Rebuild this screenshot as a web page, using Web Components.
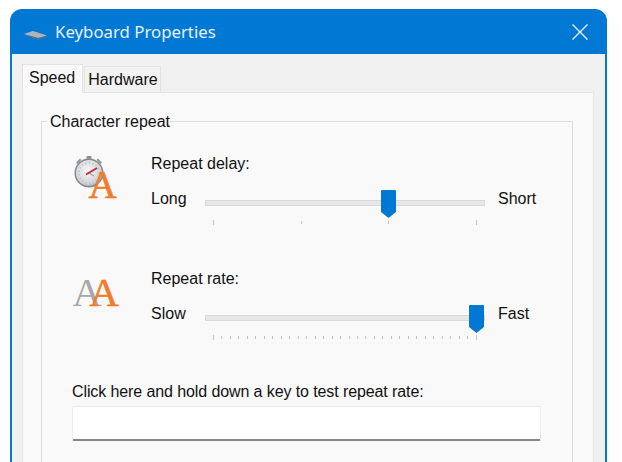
<!DOCTYPE html>
<html>
<head>
<meta charset="utf-8">
<title>Keyboard Properties</title>
<style>
  html, body { height: 100%; overflow: hidden; }
  body {
    margin: 0;
    padding: 9px 15px 0 10px;
    box-sizing: border-box;
    background: #ffffff;
    font-family: "Liberation Sans", Arial, sans-serif;
    font-size: 16px;
    color: #111111;
  }
</style>
</head>
<body>
<kb-window heading="Keyboard Properties">
  <kb-tabs>
    <kb-tab active>Speed</kb-tab>
    <kb-tab>Hardware</kb-tab>
  </kb-tabs>
  <kb-panel>
    <kb-group legend="Character repeat">
      <kb-setting label="Repeat delay:" low="Long" high="Short" ticks="4" value="0.6667" icon="delay"></kb-setting>
      <kb-setting label="Repeat rate:" low="Slow" high="Fast" ticks="32" value="1" icon="rate"></kb-setting>
      <kb-testbox label="Click here and hold down a key to test repeat rate:"></kb-testbox>
    </kb-group>
  </kb-panel>
</kb-window>

<script>
class KbWindow extends HTMLElement {
  constructor() {
    super();
    this.attachShadow({ mode: "open" });
  }

  connectedCallback() {
    const heading = this.getAttribute("heading");

    this.shadowRoot.innerHTML = `
    <style>
      :host { display: block; height: calc(100vh - 9px); }
      .frame {
        height: 100%;
        box-sizing: border-box;
        display: flex;
        flex-direction: column;
        background: #0078d4;
        border-radius: 12px 12px 0 0;
        padding: 0 2px;
      }
      .titlebar {
        flex: none;
        height: 45px;
        display: flex;
        align-items: center;
        color: #e6f2fc;
        font-family: "Noto Sans", "Open Sans", sans-serif;
        font-size: 16.8px;
        padding: 0 17px 0 12px;
      }
      .titlebar .name { flex: 1; margin-left: 8px; }
      .titlebar .logo { margin-top: 7px; }
      .body {
        flex: 1;
        background: #f0f0f0;
        padding: 10px 11px 0 10px;
        display: flex;
        flex-direction: column;
      }
      svg { display: block; flex: none; }
    </style>
    <div class="frame">
      <div class="titlebar">
        <svg class="logo" width="23" height="10" viewBox="0 0 23 10">
          <polygon points="0,4 9,1 23,5.5 14,9.5" fill="#aab5be"/>
          <polygon points="0,4 14,8 23,5.5 14,9.5" fill="#56616b"/>
        </svg>
        <span class="name">${heading}</span>
        <svg width="16" height="16" viewBox="0 0 16 16">
          <path d="M0.5 0.5 L15.5 15.5 M15.5 0.5 L0.5 15.5" stroke="#e6f2fc" stroke-width="1.4" fill="none"/>
        </svg>
      </div>
      <div class="body"><slot></slot></div>
    </div>
    `;
  }
}

class KbTabs extends HTMLElement {
  constructor() {
    super();
    this.attachShadow({ mode: "open" });
  }

  connectedCallback() {
    this.shadowRoot.innerHTML = `
    <style>
      :host {
        display: flex;
        align-items: flex-end;
        gap: 1px;
        position: relative;
        z-index: 1;
        margin-bottom: -1px;
      }
    </style>
    <slot></slot>
    `;
  }
}

class KbTab extends HTMLElement {
  constructor() {
    super();
    this.attachShadow({ mode: "open" });
  }

  connectedCallback() {
    this.shadowRoot.innerHTML = `
    <style>
      :host {
        display: block;
        box-sizing: border-box;
        height: 27px;
        padding: 4px 2px 0 3px;
        line-height: 18px;
        background: #f2f2f2;
        border: 1px solid #e3e3e3;
        border-bottom: 1px solid #e3e3e3;
      }
      :host([active]) {
        height: 29px;
        padding: 4px 7px 0 6px;
        background: #f9f9f9;
        border-bottom-color: #f9f9f9;
      }
    </style>
    <slot></slot>
    `;
  }
}

class KbPanel extends HTMLElement {
  constructor() {
    super();
    this.attachShadow({ mode: "open" });
  }

  connectedCallback() {
    this.shadowRoot.innerHTML = `
    <style>
      :host {
        display: block;
        flex: 1;
        box-sizing: border-box;
        background: #f9f9f9;
        border: 1px solid #e6e6e6;
        border-bottom: none;
        padding: 18px 20px 0 18px;
      }
    </style>
    <slot></slot>
    `;
  }
}

class KbGroup extends HTMLElement {
  constructor() {
    super();
    this.attachShadow({ mode: "open" });
  }

  connectedCallback() {
    const legend = this.getAttribute("legend");

    this.shadowRoot.innerHTML = `
    <style>
      :host { display: block; }
      fieldset {
        margin: 0;
        border: 1px solid #dcdcdc;
        border-bottom: none;
        padding: 23px 31px 40px 30px;
      }
      legend {
        margin-left: -25px;
        padding: 2px 0 0 3px;
        line-height: 18px;
      }
    </style>
    <fieldset>
      <legend>${legend}</legend>
      <slot></slot>
    </fieldset>
    `;
  }
}

const icons = {
  delay: `
    <svg width="50" height="54" viewBox="0 0 50 54">
      <defs>
        <radialGradient id="face" cx="0.45" cy="0.4" r="0.65">
          <stop offset="0" stop-color="#f4f5f6"/>
          <stop offset="0.75" stop-color="#d4d7da"/>
          <stop offset="1" stop-color="#a5a9ad"/>
        </radialGradient>
      </defs>
      <rect x="13.5" y="3" width="5" height="3" rx="1" fill="#8d9094"/>
      <rect x="14.5" y="5" width="3" height="3" fill="#a8abae"/>
      <path d="M25 5.5 L29 9.5 L27.5 11 L23.5 7 Z" fill="#94979b"/>
      <path d="M7 5.5 L3 9.5 L4.5 11 L8.5 7 Z" fill="#94979b"/>
      <circle cx="16" cy="20" r="14.5" fill="#85888c"/>
      <circle cx="16" cy="20" r="13" fill="url(#face)"/>
      <circle cx="16" cy="20" r="10" fill="none" stroke="#b4b7bb" stroke-width="1.6" stroke-dasharray="1 2.6"/>
      <path d="M13 21.5 L24 15" stroke="#c8202c" stroke-width="1.6"/>
      <path d="M16 20 L21 23" stroke="#85888c" stroke-width="1"/>
      <text x="29.5" y="45" text-anchor="middle" font-family="'Liberation Serif', serif" font-size="39" fill="#f27c2c" stroke="#f27c2c" stroke-width="0.7">A</text>
    </svg>`,
  rate: `
    <svg width="50" height="50" viewBox="0 0 50 50">
      <text x="14" y="38" text-anchor="middle" font-family="'Liberation Serif', serif" font-size="41" fill="#a8a8a8">A</text>
      <text x="31" y="38" text-anchor="middle" font-family="'Liberation Serif', serif" font-size="41" fill="#f27c2c" stroke="#f27c2c" stroke-width="0.5">A</text>
    </svg>`
};

class KbSetting extends HTMLElement {
  constructor() {
    super();
    this.attachShadow({ mode: "open" });
  }

  connectedCallback() {
    const label = this.getAttribute("label");
    const low = this.getAttribute("low");
    const high = this.getAttribute("high");
    const ticks = this.getAttribute("ticks");
    const value = this.getAttribute("value");
    const icon = this.getAttribute("icon");

    this.shadowRoot.innerHTML = `
    <style>
      :host {
        display: grid;
        grid-template-columns: 79px 1fr;
        height: 115px;
      }
      .icon { margin-left: 1px; margin-top: -1px; }
      .label { line-height: 20px; margin-bottom: 15px; }
      .row {
        display: grid;
        grid-template-columns: 41px 280px auto;
        column-gap: 13px;
      }
      .end { line-height: 20px; }
    </style>
    <div class="icon">${icons[icon]}</div>
    <div>
      <div class="label">${label}</div>
      <div class="row">
        <span class="end">${low}</span>
        <kb-slider ticks="${ticks}" value="${value}"></kb-slider>
        <span class="end">${high}</span>
      </div>
    </div>
    `;
  }
}

class KbSlider extends HTMLElement {
  constructor() {
    super();
    this.attachShadow({ mode: "open" });
  }

  connectedCallback() {
    const count = Number(this.getAttribute("ticks"));
    const value = Number(this.getAttribute("value"));
    const marks = Array.from({ length: count }, () => "<i></i>").join("");

    this.shadowRoot.innerHTML = `
    <style>
      :host {
        display: block;
        position: relative;
        height: 40px;
        margin-top: 1px;
        padding-top: 10px;
        box-sizing: border-box;
      }
      .track {
        height: 6px;
        box-sizing: border-box;
        background: #e7e7e7;
        border: 1px solid #d9d9d9;
      }
      .ticks {
        display: flex;
        justify-content: space-between;
        align-items: center;
        width: 264px;
        height: 5px;
        margin: 14px 0 0 8px;
      }
      i { display: block; width: 1px; height: 3px; background: #c4c4c4; }
      i:first-child, i:last-child { height: 5px; }
      svg { position: absolute; top: 0; left: ${8 + value * 263 - 7}px; display: block; }
    </style>
    <div class="track"></div>
    <div class="ticks">${marks}</div>
    <svg width="15" height="28" viewBox="0 0 15 28">
      <path d="M1 0 H14 A1 1 0 0 1 15 1 V22 L7.5 28 L0 22 V1 A1 1 0 0 1 1 0 Z" fill="#0078d4"/>
    </svg>
    `;
  }
}

class KbTestbox extends HTMLElement {
  constructor() {
    super();
    this.attachShadow({ mode: "open" });
  }

  connectedCallback() {
    const label = this.getAttribute("label");

    this.shadowRoot.innerHTML = `
    <style>
      :host { display: block; margin-top: -2px; }
      .label { line-height: 20px; margin-bottom: 4px; letter-spacing: -0.1px; }
      input {
        display: block;
        width: 100%;
        height: 35px;
        box-sizing: border-box;
        background: #ffffff;
        border: 1px solid #ececec;
        border-bottom: 2px solid #868686;
        border-radius: 2px;
        outline: none;
      }
    </style>
    <div class="label">${label}</div>
    <input type="text">
    `;
  }
}

customElements.define("kb-window", KbWindow);
customElements.define("kb-tabs", KbTabs);
customElements.define("kb-tab", KbTab);
customElements.define("kb-panel", KbPanel);
customElements.define("kb-group", KbGroup);
customElements.define("kb-setting", KbSetting);
customElements.define("kb-slider", KbSlider);
customElements.define("kb-testbox", KbTestbox);
</script>
</body>
</html>
